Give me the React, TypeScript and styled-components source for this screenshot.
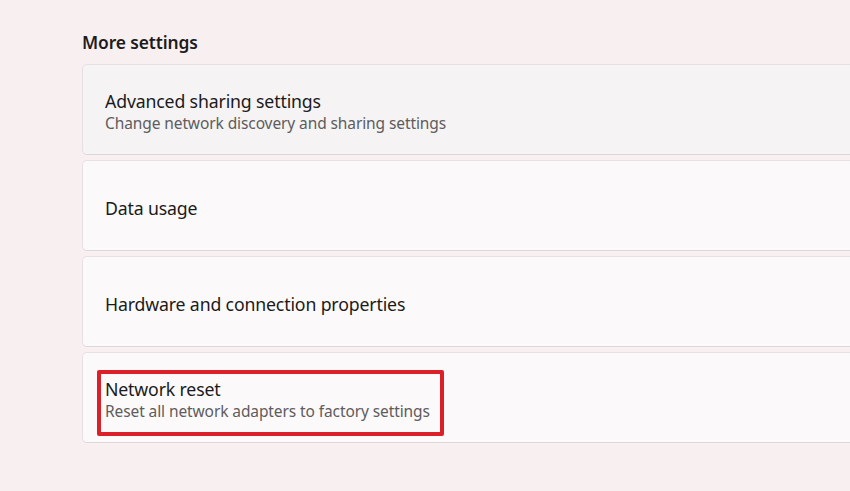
import React from "react";
import styled, { createGlobalStyle } from "styled-components";

const Global = createGlobalStyle`
  html, body { margin: 0; padding: 0; }
  body {
    background: #f8eff1;
    width: 850px;
    height: 491px;
    overflow: hidden;
    font-family: "Noto Sans", "Open Sans", sans-serif;
  }
`;

const Page = styled.div`
  padding: 31px 0 0 82px;
  display: flex;
  flex-direction: column;
  width: 768px;
  overflow: hidden;
`;

const Heading = styled.h2`
  margin: 0 0 11px 0;
  font-size: 17.4px;
  font-weight: 600;
  color: #1c1c1c;
  line-height: 22px;
  letter-spacing: -0.1px;
`;

const List = styled.div`
  display: flex;
  flex-direction: column;
  gap: 5px;
  width: 820px;
`;

const Card = styled.div<{ $active?: boolean }>`
  height: 91px;
  box-sizing: border-box;
  background: ${(p) => (p.$active ? "#f5f3f4" : "#fcf9fa")};
  border: 1px solid #e6e0e2;
  border-bottom-color: #dcd6d8;
  border-radius: 5px;
  display: flex;
  align-items: center;
  padding: 5px 0 0 22px;
`;

const TextBlock = styled.div<{ $highlight?: boolean }>`
  display: flex;
  flex-direction: column;
  ${(p) =>
    p.$highlight
      ? `
    border: 4px solid #dc2029;
    border-radius: 2px;
    padding: 4px 10px 10px 4px;
    margin: -8px 0 -14px -8px;
  `
      : ""}
`;

const Title = styled.div`
  font-size: 17.7px;
  line-height: 22px;
  color: #1b1b1b;
  letter-spacing: -0.15px;
`;

const Subtitle = styled.div`
  font-size: 15.5px;
  line-height: 22px;
  color: #5e5c5d;
  letter-spacing: -0.1px;
`;

const items = [
  { title: "Advanced sharing settings", sub: "Change network discovery and sharing settings", active: true },
  { title: "Data usage" },
  { title: "Hardware and connection properties" },
  { title: "Network reset", sub: "Reset all network adapters to factory settings", highlight: true },
];

export default function App() {
  return (
    <>
      <Global />
      <Page>
        <Heading>More settings</Heading>
        <List>
          {items.map((it) => (
            <Card key={it.title} $active={it.active}>
              <TextBlock $highlight={it.highlight}>
                <Title>{it.title}</Title>
                {it.sub && <Subtitle>{it.sub}</Subtitle>}
              </TextBlock>
            </Card>
          ))}
        </List>
      </Page>
    </>
  );
}
